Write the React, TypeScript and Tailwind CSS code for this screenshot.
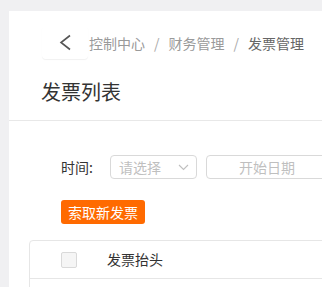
import React from "react";

const font = { fontFamily: '"Noto Sans CJK SC", "Noto Sans", sans-serif' };

export default function App() {
  return (
    <div className="min-h-screen bg-[#f0f0f2] pl-[9px] pt-[11px] overflow-hidden" style={font}>
      <div className="w-[400px] bg-white">
        <div className="h-[110px] border-b border-[#e8e8e8] pl-[33px] pt-[15px]">
          <div className="flex items-center h-[33px]">
            <div className="w-[46px] h-[33px] rounded-[4px] shadow-[0_1px_1px_rgba(0,0,0,0.06)] flex items-center justify-center">
              <svg width="14" height="17" viewBox="0 0 14 17" fill="none">
                <path d="M12 1.5 L3 8.5 L12 15.5" stroke="#555" strokeWidth="1.6" />
              </svg>
            </div>
            <div className="ml-[1px] flex items-center text-[14px] text-[#9a9a9a] whitespace-nowrap leading-none">
              <span>控制中心</span>
              <span className="mx-[9px] text-[#aaa]">/</span>
              <span>财务管理</span>
              <span className="mx-[9px] text-[#aaa]">/</span>
              <span className="text-[#666]">发票管理</span>
            </div>
          </div>
          <div className="mt-[19px] -ml-[1px] text-[20px] leading-[28px] text-[#333]">发票列表</div>
        </div>
        <div className="pt-[34px] pl-[20px]">
          <div className="pl-[32px] flex items-center h-[24px] whitespace-nowrap">
            <span className="text-[14px] text-[#333] w-[49px]">时间:</span>
            <div className="w-[87px] h-[24px] border border-[#d9d9d9] rounded-[4px] flex items-center justify-between pl-[8px] pr-[7px]">
              <span className="text-[14px] text-[#bfbfbf]">请选择</span>
              <svg width="11" height="7" viewBox="0 0 11 7" fill="none">
                <path d="M1 1 L5.5 5.5 L10 1" stroke="#bfbfbf" strokeWidth="1.1" />
              </svg>
            </div>
            <div className="ml-[9px] w-[150px] h-[24px] border border-[#d9d9d9] rounded-[4px] flex items-center pl-[32px]">
              <span className="text-[14px] text-[#bfbfbf]">开始日期</span>
            </div>
          </div>
          <div className="pl-[32px] mt-[20px]">
            <button className="h-[24px] px-[7px] rounded-[3px] bg-[#ff6a00] text-white text-[14px] leading-none">索取新发票</button>
          </div>
          <div className="mt-[16px] border border-[#e6e6e6] rounded-tl-[4px] h-[60px]">
            <div className="h-[38px] border-b border-[#e6e6e6] flex items-center pl-[31px]">
              <div className="w-[16px] h-[16px] border border-[#d9d9d9] rounded-[2px] bg-[#f5f5f5]"></div>
              <span className="ml-[30px] text-[14px] text-[#333]">发票抬头</span>
            </div>
          </div>
        </div>
      </div>
    </div>
  );
}
